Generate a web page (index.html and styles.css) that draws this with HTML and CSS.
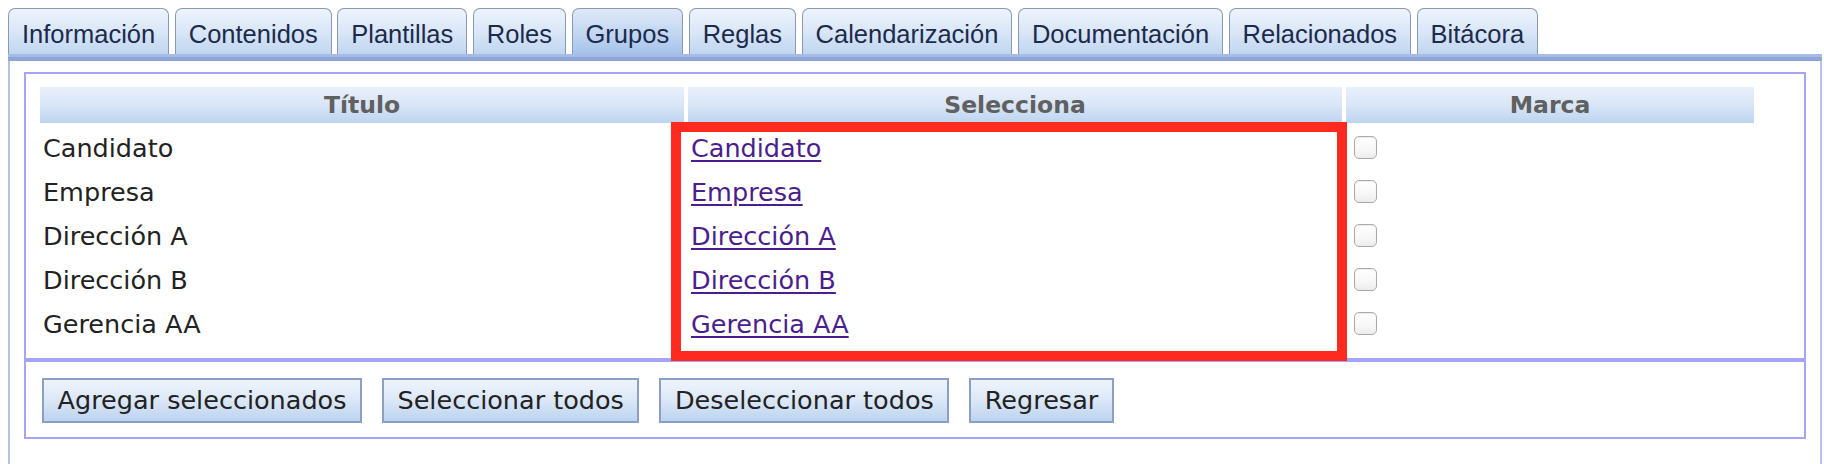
FILE: index.html
```html
<!DOCTYPE html>
<html lang="es">
<head>
<meta charset="utf-8">
<title>Grupos</title>
<link rel="stylesheet" href="styles.css">
</head>
<body>
<div class="page">
  <nav class="tabs">
    <div class="tab">Información</div>
    <div class="tab">Contenidos</div>
    <div class="tab">Plantillas</div>
    <div class="tab">Roles</div>
    <div class="tab active">Grupos</div>
    <div class="tab">Reglas</div>
    <div class="tab">Calendarización</div>
    <div class="tab">Documentación</div>
    <div class="tab">Relacionados</div>
    <div class="tab">Bitácora</div>
  </nav>
  <div class="tabbar"></div>
  <div class="panel">
    <div class="box">
      <div class="list">
        <div class="grid">
          <div class="th">Título</div>
          <div class="th">Selecciona</div>
          <div class="th">Marca</div>

          <div class="td">Candidato</div>
          <div class="td"><a class="link" href="#">Candidato</a></div>
          <div class="td mark"><input class="check" type="checkbox"></div>

          <div class="td">Empresa</div>
          <div class="td"><a class="link" href="#">Empresa</a></div>
          <div class="td mark"><input class="check" type="checkbox"></div>

          <div class="td">Dirección A</div>
          <div class="td"><a class="link" href="#">Dirección A</a></div>
          <div class="td mark"><input class="check" type="checkbox"></div>

          <div class="td">Dirección B</div>
          <div class="td"><a class="link" href="#">Dirección B</a></div>
          <div class="td mark"><input class="check" type="checkbox"></div>

          <div class="td">Gerencia AA</div>
          <div class="td"><a class="link" href="#">Gerencia AA</a></div>
          <div class="td mark"><input class="check" type="checkbox"></div>
        </div>
        <div class="highlight"></div>
      </div>
      <div class="actions">
        <button class="btn" type="button">Agregar seleccionados</button>
        <button class="btn" type="button">Seleccionar todos</button>
        <button class="btn" type="button">Deseleccionar todos</button>
        <button class="btn" type="button">Regresar</button>
      </div>
    </div>
  </div>
</div>
</body>
</html>
```

FILE: styles.css
```css
html, body {
  margin: 0;
  padding: 0;
  height: 100%;
  overflow: hidden;
  background: #ffffff;
}

.page {
  padding: 0 2px 0 8px;
  height: 100%;
  display: flex;
  flex-direction: column;
}

.tabs {
  display: flex;
  gap: 5.5px;
  padding-top: 8px;
  font-family: "Liberation Sans", Arial, sans-serif;
  font-size: 25.5px;
  color: #1b2b4b;
}

.tab {
  height: 45px;
  box-sizing: border-box;
  padding: 10px 13px 5px;
  line-height: 30px;
  border: 1px solid #8a9ab6;
  border-bottom: none;
  border-radius: 7px 7px 0 0;
  background: linear-gradient(to bottom, #ecf3fd 0%, #dce8f8 45%, #c0d6f0 100%);
  white-space: nowrap;
  height: 46px;
}

.tab.active {
  background: linear-gradient(to bottom, #dfe9f8 0%, #c4d8f2 50%, #a6c2ea 100%);
}

.tabbar {
  height: 7px;
  background: linear-gradient(to bottom, #a6bce6 0, #a6bce6 3px, #8ea6d3 3px, #8ea6d3 7px);
}

.panel {
  flex: 1;
  border-left: 2px solid #b3c3e9;
  border-right: 2px solid #b3c3e9;
  padding: 11px 14px 0 14px;
}

.box {
  border: 2px solid #a4a4f8;
  font-family: "DejaVu Sans", Verdana, sans-serif;
  font-size: 25.5px;
  color: #222222;
}

.list {
  position: relative;
  padding: 13px 0 15px 14px;
  border-bottom: 4px solid #a4a4f8;
}

.grid {
  display: grid;
  grid-template-columns: 644px 654px 408px;
  grid-auto-rows: 40px;
  grid-template-rows: 36px;
  gap: 4px;
}

.th {
  background: linear-gradient(to bottom, #e9f0fb 0%, #d9e6f7 50%, #bdd4ee 100%);
  color: #606060;
  font-weight: bold;
  font-size: 23.5px;
  line-height: 36px;
  text-align: center;
}

.td {
  box-sizing: border-box;
  padding: 2px 0 0 3px;
  line-height: 38px;
  white-space: nowrap;
}

.link {
  color: #4a1e8c;
  text-decoration: underline;
  text-decoration-thickness: 2px;
  text-underline-offset: 3px;
}

.mark {
  display: flex;
  align-items: center;
  padding: 0 0 0 8px;
}

.check {
  appearance: none;
  -webkit-appearance: none;
  margin: 0;
  width: 23px;
  height: 23px;
  box-sizing: border-box;
  border: 1.5px solid #aaaaaa;
  border-radius: 5px;
  background: linear-gradient(to bottom, #ffffff 0%, #f7f7f7 60%, #ececec 100%);
  box-shadow: inset 0 1px 1px rgba(0, 0, 0, 0.08);
}

.highlight {
  position: absolute;
  left: 645px;
  top: 48px;
  width: 676px;
  height: 239px;
  box-sizing: border-box;
  border: 10px solid #fe2a1f;
  pointer-events: none;
}

.actions {
  display: flex;
  gap: 20px;
  padding: 16px 0 14px 16px;
}

.btn {
  font-family: "DejaVu Sans", Verdana, sans-serif;
  font-size: 25.5px;
  color: #222222;
  height: 45px;
  box-sizing: border-box;
  padding: 0 13.5px;
  line-height: 41px;
  border: 2px solid #8a9fc3;
  border-radius: 0;
  background: linear-gradient(to bottom, #eef4fd 0%, #dbe7f8 50%, #bcd3ee 100%);
  white-space: nowrap;
  margin: 0;
}
```
